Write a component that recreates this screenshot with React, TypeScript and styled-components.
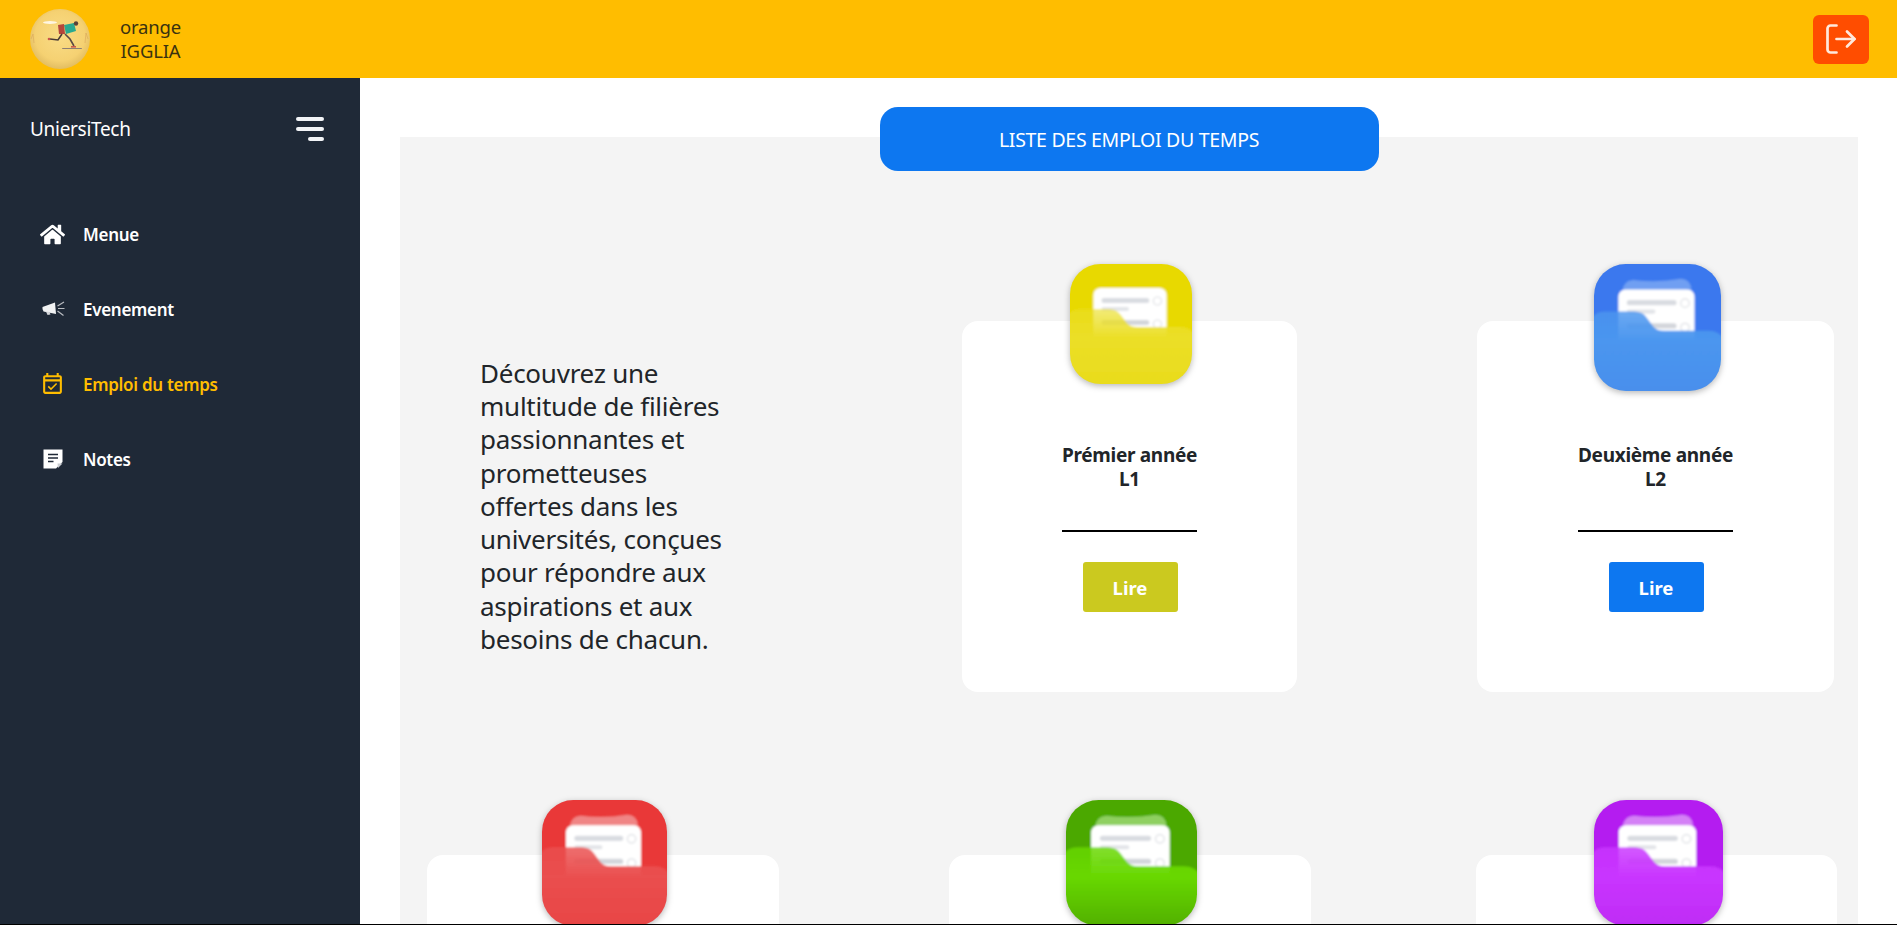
import React from "react";
import styled, { createGlobalStyle } from "styled-components";
import { FaHome } from "react-icons/fa";
import { MdOutlineEventAvailable } from "react-icons/md";
import { LogOut } from "lucide-react";

const GlobalStyle = createGlobalStyle`
  html, body {
    margin: 0;
    height: 100%;
    overflow: hidden;
    background: #000;
    font-family: "Noto Sans", "Open Sans", sans-serif;
  }
  * { box-sizing: border-box; }
`;

const Page = styled.div`
  height: 924px;
  display: flex;
  flex-direction: column;
  background: #fff;
  overflow: hidden;
`;

const Header = styled.header`
  height: 78px;
  flex-shrink: 0;
  display: flex;
  align-items: center;
  padding: 0 28px 0 30px;
  background: #ffbd00;
`;

const Avatar = styled.svg`
  width: 60px;
  height: 60px;
  margin-right: 30px;
  flex-shrink: 0;
`;

const UserName = styled.div`
  font-size: 18.5px;
  line-height: 24px;
  color: #3a3210;
  text-align: center;
  letter-spacing: -0.2px;
`;

const LogoutButton = styled.button`
  width: 56px;
  height: 49px;
  margin-left: auto;
  display: flex;
  align-items: center;
  justify-content: center;
  padding: 0;
  border: none;
  border-radius: 6px;
  background: #ff4d00;
  color: #ffe9dc;
  cursor: pointer;
`;

const Body = styled.div`
  flex: 1;
  display: flex;
  min-height: 0;
`;

const Sidebar = styled.aside`
  width: 360px;
  flex-shrink: 0;
  padding: 36px 36px 0 30px;
  background: #1f2937;
`;

const Brand = styled.div`
  display: flex;
  align-items: center;
  justify-content: space-between;
  height: 30px;
  margin-bottom: 75px;
  font-size: 19px;
  color: #fff;
  letter-spacing: -0.3px;
`;

const NavList = styled.nav`
  display: flex;
  flex-direction: column;
  gap: 45px;
`;

const NavItem = styled.a<{ $active?: boolean }>`
  display: flex;
  align-items: center;
  height: 30px;
  gap: 18px;
  padding-left: 10px;
  font-size: 17px;
  font-weight: 600;
  letter-spacing: -0.3px;
  color: ${(p) => (p.$active ? "#ffbd00" : "#fff")};
  cursor: pointer;
`;

const NavIcon = styled.span`
  width: 25px;
  height: 25px;
  display: flex;
  align-items: center;
  justify-content: center;
`;

const Main = styled.main`
  flex: 1;
  min-width: 0;
  padding: 29px 39px 0 40px;
  overflow: hidden;
`;

const Title = styled.div`
  position: relative;
  width: 499px;
  height: 64px;
  margin: 0 auto -34px;
  display: flex;
  align-items: center;
  justify-content: center;
  border-radius: 18px;
  background: #0d77f0;
  color: #fff;
  font-size: 19.5px;
  letter-spacing: -0.3px;
`;

const Panel = styled.section`
  height: 900px;
  background: #f4f4f4;
`;

const Row = styled.div<{ $top: number; $left: number }>`
  display: flex;
  align-items: center;
  padding-top: ${(p) => p.$top}px;
  padding-left: ${(p) => p.$left}px;
`;

const Intro = styled.p`
  width: 262px;
  margin: 0 220px 0 0;
  font-size: 26px;
  line-height: 33.2px;
  color: #212529;
  letter-spacing: -0.25px;
`;

const Card = styled.article<{ $width: number; $gap?: number }>`
  width: ${(p) => p.$width}px;
  height: 371px;
  margin-left: ${(p) => p.$gap ?? 0}px;
  flex-shrink: 0;
  display: flex;
  flex-direction: column;
  align-items: center;
  border-radius: 16px;
  background: #fff;
`;

const IconSlot = styled.div<{ $lift: number }>`
  height: 127px;
  margin-top: -${(p) => p.$lift}px;
  margin-bottom: 52px;
  padding-left: 3px;
`;

const FolderSvg = styled.svg`
  display: block;
  filter: drop-shadow(0 2px 3px rgba(0, 0, 0, 0.28));
`;

const CardHeading = styled.h3`
  margin: 0;
  padding-bottom: 39px;
  border-bottom: 2px solid #000;
  font-size: 19px;
  line-height: 24px;
  font-weight: 700;
  color: #212529;
  text-align: center;
  letter-spacing: -0.3px;
`;

const ReadButton = styled.button<{ $color: string }>`
  width: 95px;
  height: 50px;
  margin-top: 30px;
  margin-left: 1px;
  border: none;
  border-radius: 3px;
  background: ${(p) => p.$color};
  color: #fff;
  font-family: inherit;
  font-size: 18.5px;
  font-weight: 700;
  cursor: pointer;
`;

interface FolderProps {
  id: string;
  width: number;
  height: number;
  base: string;
  sheet: string;
  frontTop: string;
  frontBottom: string;
  frontAlpha?: number;
  backSheet?: boolean;
}

// app-icon style folder: tile, paper sheets, translucent front flap
const FolderIcon: React.FC<FolderProps> = ({
  id,
  width,
  height,
  base,
  sheet,
  frontTop,
  frontBottom,
  frontAlpha = 0.82,
  backSheet = true,
}) => (
  <FolderSvg width={width} height={height} viewBox="0 0 120 120" preserveAspectRatio="none">
    <defs>
      <clipPath id={`${id}-tile`}>
        <rect width="120" height="120" rx="30" />
      </clipPath>
      <linearGradient id={`${id}-front`} x1="0" y1="45" x2="0" y2="120" gradientUnits="userSpaceOnUse">
        <stop offset="0" stopColor={frontTop} stopOpacity={frontAlpha} />
        <stop offset="0.38" stopColor={frontTop} stopOpacity="1" />
        <stop offset="1" stopColor={frontBottom} stopOpacity="1" />
      </linearGradient>
      <filter id={`${id}-soft`} x="-5%" y="-5%" width="110%" height="110%">
        <feGaussianBlur stdDeviation="0.8" />
      </filter>
    </defs>
    <g clipPath={`url(#${id}-tile)`}>
      <g filter={`url(#${id}-soft)`}>
        <rect x="-4" y="-4" width="128" height="128" fill={base} />
        {backSheet && <path d="M27 26 Q27 16 37 15 Q60 18 82 14 Q91 14 92 24 V40 H27 Z" fill={sheet} />}
        <rect x="23" y="24" width="72" height="56" rx="7" fill="#fff" />
        <rect x="31" y="34" width="47" height="5" rx="2.5" fill="#d9dce1" />
        <rect x="31" y="43" width="27" height="4" rx="2" fill="#e2e4e8" />
        <circle cx="86" cy="37" r="4" fill="#fff" stroke="#dfe1e5" strokeWidth="1.2" />
        <rect x="31" y="56" width="47" height="5" rx="2.5" fill="#d3d6db" />
        <circle cx="86" cy="60" r="4" fill="#fff" stroke="#dfe1e5" strokeWidth="1.2" />
        <path
          d="M-4 55 Q0 45 10 45 H38 Q46 45 50 51 L56 59 Q59 63 66 63 H108 Q120 63 124 74 V124 H-4 Z"
          fill={`url(#${id}-front)`}
        />
      </g>
    </g>
  </FolderSvg>
);

const MegaphoneIcon = () => (
  <svg width="24" height="20" viewBox="0 0 24 20">
    <path d="M1.5 8 L14 3.5 L15 15 L2.5 12.5 Q1 10 1.5 8 Z" fill="#f1f2f3" />
    <path d="M5 12.5 L6.5 16 L9.5 15.5 L8.5 13 Z" fill="#d4d6d9" />
    <path d="M16.5 7 L23 3 M17 9.5 L23.5 9.5 M16.5 12 L22.5 16.5" stroke="#b9bcc1" strokeWidth="1.2" />
  </svg>
);

const NotesIcon = () => (
  <svg width="20" height="20" viewBox="0 0 20 20">
    <path d="M0.5 0.5 H19.5 V13 L13 19.5 H0.5 Z" fill="#fff" />
    <path d="M15 19 L19.5 14.5 L14.5 14.5 Z" fill="#c9ccd1" />
    <path d="M5 5.5 H15 M5 9 H15 M5 12.5 H10.5" stroke="#1f2937" strokeWidth="1.7" />
  </svg>
);

const MenuIcon = () => (
  <svg width="28" height="25" viewBox="0 0 28 25">
    <rect x="0" y="0" width="28" height="4" rx="2" fill="#f2f4f7" />
    <rect x="0" y="10" width="28" height="4" rx="2" fill="#f2f4f7" />
    <rect x="12" y="20" width="16" height="4" rx="2" fill="#f2f4f7" />
  </svg>
);

const AvatarImage = () => (
  <Avatar viewBox="0 0 60 60">
    <defs>
      <radialGradient id="avatar-bg" cx="50%" cy="45%" r="55%">
        <stop offset="0" stopColor="#f9dc86" />
        <stop offset="0.75" stopColor="#f5d172" />
        <stop offset="1" stopColor="#e2bd62" />
      </radialGradient>
    </defs>
    <circle cx="30" cy="30" r="30" fill="url(#avatar-bg)" />
    <ellipse cx="20" cy="13.5" rx="7" ry="1.4" fill="#fff6e2" />
    <path d="M1 30 l2 -5 l1 9 M58 30 l-2 -6 l-1 10" stroke="#d9a65c" strokeWidth="0.6" fill="none" />
    <path d="M34 16 L44 14 L46 22 L36 25 Z" fill="#2aa98f" />
    <path d="M28 16 L34 15 L35 25 L29 25 Z" fill="#b5463a" />
    <circle cx="46" cy="14.5" r="2.2" fill="#5a4238" />
    <path d="M32 25 L28 31 L20 30" stroke="#4a3b36" strokeWidth="1.6" fill="none" />
    <path d="M35 25 L40 30 L44 37" stroke="#5b4a44" strokeWidth="1.6" fill="none" />
    <circle cx="19" cy="30" r="1.3" fill="#c9564b" />
    <rect x="41" y="37" width="5" height="1.6" fill="#c9564b" />
    <rect x="32" y="39" width="20" height="0.9" rx="0.45" fill="#8d7f72" />
  </Avatar>
);

const App: React.FC = () => (
  <>
    <GlobalStyle />
    <Page>
      <Header>
        <AvatarImage />
        <UserName>
          orange
          <br />
          IGGLIA
        </UserName>
        <LogoutButton aria-label="Déconnexion">
          <LogOut size={36} strokeWidth={1.8} />
        </LogoutButton>
      </Header>
      <Body>
        <Sidebar>
          <Brand>
            UniersiTech
            <MenuIcon />
          </Brand>
          <NavList>
            <NavItem>
              <NavIcon>
                <FaHome size={25} />
              </NavIcon>
              Menue
            </NavItem>
            <NavItem>
              <NavIcon>
                <MegaphoneIcon />
              </NavIcon>
              Evenement
            </NavItem>
            <NavItem $active>
              <NavIcon>
                <MdOutlineEventAvailable size={27} />
              </NavIcon>
              Emploi du temps
            </NavItem>
            <NavItem>
              <NavIcon>
                <NotesIcon />
              </NavIcon>
              Notes
            </NavItem>
          </NavList>
        </Sidebar>
        <Main>
          <Title>LISTE DES EMPLOI DU TEMPS</Title>
          <Panel>
            <Row $top={184} $left={80}>
              <Intro>
                Découvrez une multitude de filières passionnantes et prometteuses offertes dans les universités,
                conçues pour répondre aux aspirations et aux besoins de chacun.
              </Intro>
              <Card $width={335}>
                <IconSlot $lift={57}>
                  <FolderIcon
                    id="yellow"
                    width={122}
                    height={120}
                    base="#e8d900"
                    sheet="#e8d900"
                    frontTop="#ebdf27"
                    frontBottom="#e9dc1d"
                    frontAlpha={0.62}
                    backSheet={false}
                  />
                </IconSlot>
                <CardHeading>
                  Prémier année
                  <br />
                  L1
                </CardHeading>
                <ReadButton $color="#cbc91f">Lire</ReadButton>
              </Card>
              <Card $width={357} $gap={180}>
                <IconSlot $lift={57}>
                  <FolderIcon
                    id="blue"
                    width={127}
                    height={127}
                    base="#3a78ee"
                    sheet="#6f9ff2"
                    frontTop="#4b96ef"
                    frontBottom="#4a8fec"
                  />
                </IconSlot>
                <CardHeading>
                  Deuxième année
                  <br />
                  L2
                </CardHeading>
                <ReadButton $color="#0d77f0">Lire</ReadButton>
              </Card>
            </Row>
            <Row $top={163} $left={27}>
              <Card $width={352}>
                <IconSlot $lift={55}>
                  <FolderIcon
                    id="red"
                    width={125}
                    height={126}
                    base="#e93838"
                    sheet="#f08585"
                    frontTop="#ea4f4f"
                    frontBottom="#e84545"
                  />
                </IconSlot>
              </Card>
              <Card $width={362} $gap={170}>
                <IconSlot $lift={55}>
                  <FolderIcon
                    id="green"
                    width={131}
                    height={126}
                    base="#4ba800"
                    sheet="#8fd060"
                    frontTop="#68d800"
                    frontBottom="#52b000"
                  />
                </IconSlot>
              </Card>
              <Card $width={361} $gap={165}>
                <IconSlot $lift={55}>
                  <FolderIcon
                    id="purple"
                    width={129}
                    height={126}
                    base="#b41ef0"
                    sheet="#d480f6"
                    frontTop="#c935ff"
                    frontBottom="#bf2cf5"
                  />
                </IconSlot>
              </Card>
            </Row>
          </Panel>
        </Main>
      </Body>
    </Page>
  </>
);

export default App;
